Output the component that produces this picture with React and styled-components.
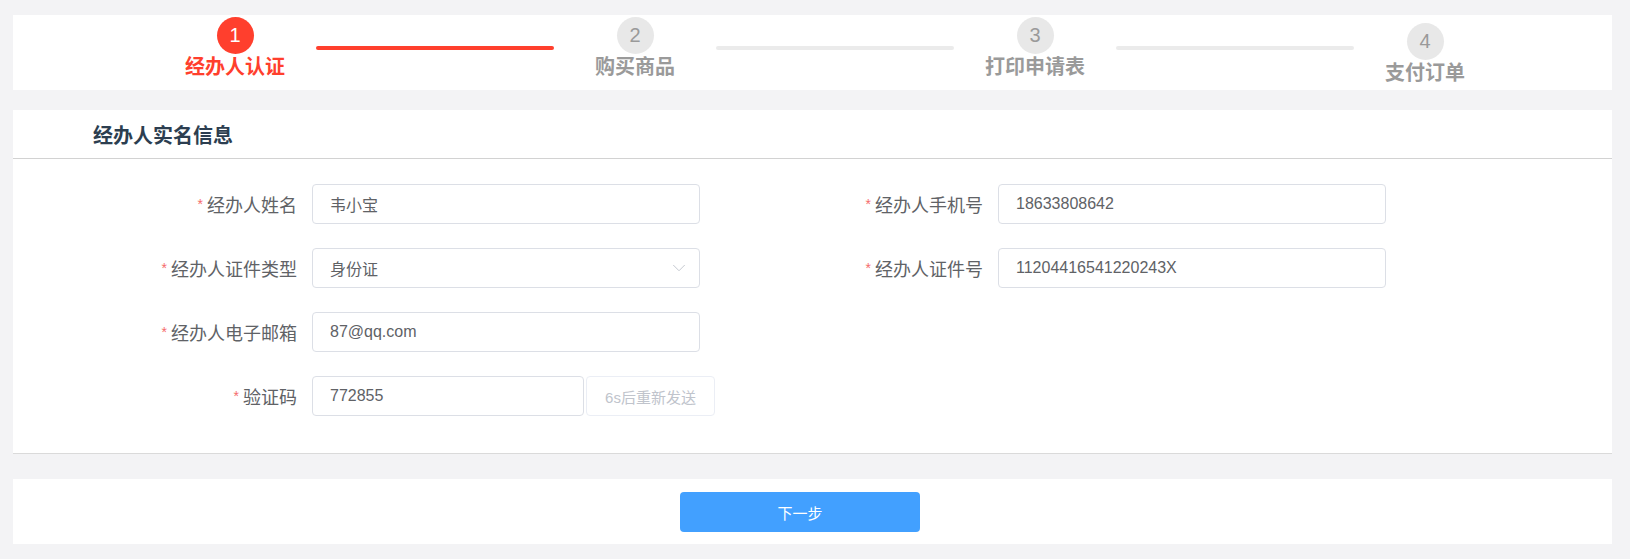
import { createGlobalStyle } from 'styled-components';
import styled from 'styled-components';
import { ChevronDown } from 'lucide-react';

const steps = ['经办人认证', '购买商品', '打印申请表', '支付订单'];

const App = () => {
  return (
    <Page>
      <GlobalStyle />
      <StepPanel>
        {steps.map((name, i) => (
          <StepGroup key={name}>
            <Step $last={i === steps.length - 1}>
              <Circle $active={i === 0}>{i + 1}</Circle>
              <StepName $active={i === 0}>{name}</StepName>
            </Step>
            {i < steps.length - 1 && <Line $active={i === 0} />}
          </StepGroup>
        ))}
      </StepPanel>

      <FormPanel>
        <Header>
          <Title>经办人实名信息</Title>
        </Header>
        <FormBody>
          <Column>
            <Item>
              <Label>经办人姓名</Label>
              <Input defaultValue='韦小宝' />
            </Item>
            <Item>
              <Label>经办人证件类型</Label>
              <Select>
                <span>身份证</span>
                <ChevronDown size={22} strokeWidth={1} color='#c0c4cc' />
              </Select>
            </Item>
            <Item>
              <Label>经办人电子邮箱</Label>
              <Input defaultValue='87@qq.com' />
            </Item>
            <Item>
              <Label>验证码</Label>
              <Input $width='272px' defaultValue='772855' />
              <SendButton disabled>6s后重新发送</SendButton>
            </Item>
          </Column>
          <Column>
            <Item>
              <Label>经办人手机号</Label>
              <Input defaultValue='18633808642' />
            </Item>
            <Item>
              <Label>经办人证件号</Label>
              <Input defaultValue='11204416541220243X' />
            </Item>
          </Column>
        </FormBody>
      </FormPanel>

      <ActionPanel>
        <NextButton>下一步</NextButton>
      </ActionPanel>
    </Page>
  );
}

const GlobalStyle = createGlobalStyle`
  html, body {
    margin: 0;
    padding: 0;
    background: #f3f3f5;
    font-family: "Liberation Sans", "Noto Sans CJK SC", sans-serif;
  }
  * {
    box-sizing: border-box;
  }
`;

const Page = styled.div`
  padding: 15px 18px 15px 13px;
  display: flex;
  flex-direction: column;
`;

const StepPanel = styled.div`
  height: 75px;
  background: #fff;
  display: flex;
  padding: 2px 0 0 141px;
`;

const StepGroup = styled.div`
  display: flex;
`;

const Step = styled.div`
  width: ${p => (p.$last ? '142px' : '162px')};
  margin-top: ${p => (p.$last ? '6px' : '0')};
  display: flex;
  flex-direction: column;
  align-items: center;
`;

const Circle = styled.div`
  width: 37px;
  height: 37px;
  border-radius: 50%;
  background: ${p => (p.$active ? '#ff3f2d' : '#e8e8e8')};
  color: ${p => (p.$active ? '#fff' : '#9a9a9a')};
  font-size: 20px;
  display: flex;
  align-items: center;
  justify-content: center;
`;

const StepName = styled.div`
  margin-top: 1px;
  font-size: 20px;
  line-height: 24px;
  font-weight: bold;
  color: ${p => (p.$active ? '#ff3f2d' : '#9a9a9a')};
`;

const Line = styled.div`
  width: 238px;
  height: 4px;
  margin-top: 29px;
  border-radius: 2px;
  background: ${p => (p.$active ? '#ff3f2d' : '#ebebeb')};
`;

const FormPanel = styled.div`
  margin-top: 20px;
  background: #fff;
  border-bottom: 1px solid #dadada;
`;

const Header = styled.div`
  height: 49px;
  padding-left: 80px;
  display: flex;
  align-items: center;
  border-bottom: 1px solid #d2d2d2;
`;

const Title = styled.h2`
  margin: 0;
  font-size: 20px;
  font-weight: bold;
  color: #2c3e50;
`;

const FormBody = styled.div`
  display: grid;
  grid-template-columns: 686px 1fr;
  padding: 25px 0 37px 139px;
`;

const Column = styled.div`
  display: flex;
  flex-direction: column;
  gap: 24px;
`;

const Item = styled.div`
  display: flex;
  align-items: center;
  height: 40px;
`;

const Label = styled.label`
  width: 160px;
  padding-right: 15px;
  text-align: right;
  font-size: 18px;
  color: #606266;
  &::before {
    content: '*';
    color: #f56c6c;
    font-size: 14px;
    margin-right: 4px;
    vertical-align: 3px;
  }
`;

const Input = styled.input`
  width: ${p => p.$width || '388px'};
  height: 40px;
  padding: 0 17px;
  border: 1px solid #dcdfe6;
  border-radius: 4px;
  font-family: inherit;
  font-size: 16px;
  color: #606266;
  outline: none;
`;

const Select = styled.div`
  width: 388px;
  height: 40px;
  padding: 0 9px 0 17px;
  border: 1px solid #dcdfe6;
  border-radius: 4px;
  display: flex;
  align-items: center;
  justify-content: space-between;
  font-size: 16px;
  color: #606266;
`;

const SendButton = styled.button`
  width: 129px;
  height: 40px;
  margin-left: 2px;
  border: 1px solid #ebeef5;
  border-radius: 4px;
  background: #fff;
  color: #c0c4cc;
  font-family: inherit;
  font-size: 15px;
`;

const ActionPanel = styled.div`
  margin-top: 25px;
  height: 65px;
  background: #fff;
  display: flex;
  justify-content: center;
  align-items: flex-start;
  padding: 13px 25px 0 0;
`;

const NextButton = styled.button`
  width: 240px;
  height: 40px;
  border: none;
  border-radius: 4px;
  background: #42a0ff;
  color: #fff;
  font-family: inherit;
  font-size: 15px;
  cursor: pointer;
`;

export default App;
